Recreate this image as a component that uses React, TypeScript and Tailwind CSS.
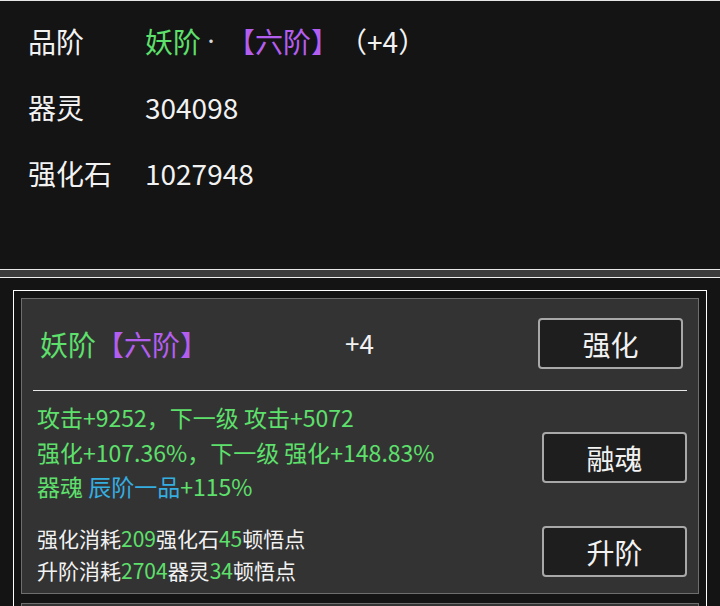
import React from "react";

const font = { fontFamily: '"Noto Sans CJK SC", "Noto Sans", sans-serif' };

const green = "text-[#5ee06c]";
const purple = "text-[#b45ef0]";
const cyan = "text-[#35aee0]";

function InfoRow({ label, children }: { label: string; children: React.ReactNode }) {
  return (
    <div className="flex h-[66px] items-center">
      <div className="w-[117px] text-[#f2f2f2]">{label}</div>
      <div className="text-[#f2f2f2]">{children}</div>
    </div>
  );
}

function ActionButton({ label, className = "" }: { label: string; className?: string }) {
  return (
    <button
      className={`flex h-[51px] w-[145px] items-center justify-center rounded-[4px] border-2 border-[#a8a8a8] bg-[#1e1e1e] text-[28px] text-[#f2f2f2] ${className}`}
    >
      {label}
    </button>
  );
}

function EquipCard() {
  return (
    <div className="h-[296px] shrink-0 border border-[#6e6e6e] bg-[#333333]">
      {/* header */}
      <div className="flex items-center pb-[21px] pl-[18px] pr-[15px] pt-[19px]">
        <div className="w-[305px] text-[28px] [text-spacing-trim:space-all]">
          <span className={green}>妖阶</span>
          <span className={purple}>【六阶】</span>
        </div>
        <div className="-mt-[3px] text-[26px] text-[#f2f2f2]">+4</div>
        <ActionButton label="强化" className="ml-auto" />
      </div>
      <div className="mx-[11px] h-px bg-[#e8e8e8]" />

      {/* body */}
      <div className="flex pl-[15px] pr-[11px]">
        <div className="flex-1">
          <div className={`mt-[9px] text-[23px] leading-[34.5px] ${green}`}>
            <div>攻击+9252，下一级 攻击+5072</div>
            <div>强化+107.36%，下一级 强化+148.83%</div>
            <div>
              器魂 <span className={cyan}>辰阶一品</span>+115%
            </div>
          </div>
          <div className="mt-[18px] text-[21px] leading-[32px] text-[#f2f2f2]">
            <div>
              强化消耗<span className={green}>209</span>强化石<span className={green}>45</span>顿悟点
            </div>
            <div>
              升阶消耗<span className={green}>2704</span>器灵<span className={green}>34</span>顿悟点
            </div>
          </div>
        </div>
        <div className="flex flex-col pt-[41px]">
          <ActionButton label="融魂" />
          <ActionButton label="升阶" className="mt-[43px]" />
        </div>
      </div>
    </div>
  );
}

export default function App() {
  return (
    <div className="h-[606px] w-[720px] overflow-hidden bg-[#141414]" style={font}>
      {/* summary panel */}
      <div className="h-[270px] border-y border-[#e6e6e6] bg-[#141414] pl-[28px] pt-[7px] text-[28px]">
        <InfoRow label="品阶">
          <span className="[text-spacing-trim:space-all]">
            <span className={green}>妖阶</span>
            <span className="relative -top-[6px] pl-[2px] pr-[8px] text-[16px] text-[#d8d8d8]">·</span>
            <span className={purple}>【六阶】</span>
            <span>（+4）</span>
          </span>
        </InfoRow>
        <InfoRow label="器灵">304098</InfoRow>
        <InfoRow label="强化石">1027948</InfoRow>
      </div>
      <div className="h-[7px] bg-[#3c3c3c]" />
      <div className="h-px bg-[#eeeeee]" />

      {/* list */}
      <div className="pt-[12px]">
        <div className="ml-[13px] flex h-[400px] w-[694px] flex-col gap-[9px] border border-white p-[7px]">
          <EquipCard />
          <div className="h-[296px] shrink-0 border border-[#6e6e6e] bg-[#333333]" />
        </div>
      </div>
    </div>
  );
}
